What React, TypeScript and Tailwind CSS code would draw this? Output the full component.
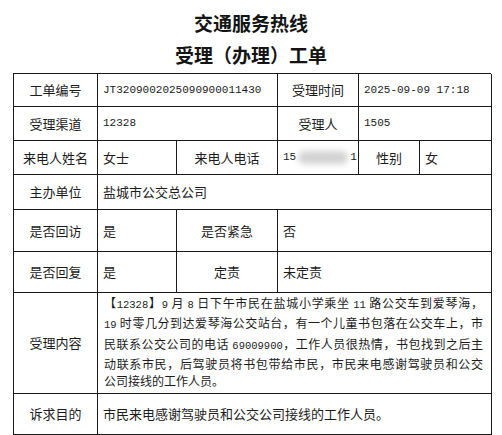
import React from "react";

const cjk = "font-['Noto_Sans_CJK_SC',sans-serif]";

const Num = ({
  children,
  size = "text-[11px]",
}: {
  children: React.ReactNode;
  size?: string;
}) => (
  <span className={`font-['Liberation_Mono',monospace] ${size}`}>
    {children}
  </span>
);

const Label = ({
  children,
  span = "col-span-1",
}: {
  children: React.ReactNode;
  span?: string;
}) => (
  <div
    className={`${span} border-r border-b border-[#1a1a1a] flex items-center justify-center text-[13px] text-[#1c1c1c]`}
  >
    {children}
  </div>
);

const Value = ({
  children,
  span = "col-span-1",
}: {
  children: React.ReactNode;
  span?: string;
}) => (
  <div
    className={`${span} border-r border-b border-[#1a1a1a] flex items-center pl-[5px] text-[13px] text-[#1c1c1c]`}
  >
    {children}
  </div>
);

const contentLines: React.ReactNode[] = [
  <>
    【<Num size="text-[10.5px]">12328</Num>】<Num size="text-[10.5px]">9</Num> 月{" "}
    <Num size="text-[10.5px]">8</Num> 日下午市民在盐城小学乘坐{" "}
    <Num size="text-[10.5px]">11</Num> 路公交车到爱琴海，
  </>,
  <>
    <Num size="text-[10.5px]">19</Num>{" "}
    时零几分到达爱琴海公交站台，有一个儿童书包落在公交车上，市
  </>,
  <>
    民联系公交公司的电话 <Num size="text-[10.5px]">69009900</Num>
    ，工作人员很热情，书包找到之后主
  </>,
  <>动联系市民，后驾驶员将书包带给市民，市民来电感谢驾驶员和公交</>,
];

export default function App() {
  return (
    <div className={`w-[502px] h-[435px] bg-white overflow-hidden ${cjk}`}>
      {/* Title */}
      <div className="pt-[12px] text-center text-[#141414]">
        <h1 className="h-[22px] leading-[22px] text-[19px] font-semibold">
          交通服务热线
        </h1>
        <h2 className="mt-[10px] h-[22px] leading-[22px] text-[19px] font-semibold">
          受理（办理）工单
        </h2>
      </div>

      {/* Table */}
      <div className="ml-[13px] mt-[7px] w-[478px] grid grid-cols-[84px_79px_101px_81px_61px_72px] grid-rows-[33px_34px_34px_35px_42px_41px_101px_41px] border-l border-t border-[#1a1a1a]">
        <Label>工单编号</Label>
        <Value span="col-span-2">
          <Num>JT3209002025090900011430</Num>
        </Value>
        <Label>受理时间</Label>
        <Value span="col-span-2">
          <Num>2025-09-09 17:18</Num>
        </Value>

        <Label>受理渠道</Label>
        <Value span="col-span-2">
          <Num>12328</Num>
        </Value>
        <Label>受理人</Label>
        <Value span="col-span-2">
          <Num>1505</Num>
        </Value>

        <Label>来电人姓名</Label>
        <Value>女士</Value>
        <Label>来电人电话</Label>
        <Value>
          <Num>15</Num>
          <span className="inline-block w-[50px] h-[13px] mx-[2px] bg-[#d2d2d2] rounded-full blur-[3px]" />
          <Num>1</Num>
        </Value>
        <Label>性别</Label>
        <Value>女</Value>

        <Label>主办单位</Label>
        <Value span="col-span-5">盐城市公交总公司</Value>

        <Label>是否回访</Label>
        <Value>是</Value>
        <Label>是否紧急</Label>
        <Value span="col-span-3">否</Value>

        <Label>是否回复</Label>
        <Value>是</Value>
        <Label>定责</Label>
        <Value span="col-span-3">未定责</Value>

        <Label>受理内容</Label>
        <div className="col-span-5 border-r border-b border-[#1a1a1a] pl-[6px] pr-[8px] pt-[1px] text-[12px] leading-[17.3px] text-[#1c1c1c]">
          {contentLines.map((line, idx) => (
            <div
              key={idx}
              className="text-justify [text-align-last:justify] whitespace-nowrap"
            >
              {line}
            </div>
          ))}
          <div>公司接线的工作人员。</div>
        </div>

        <Label>诉求目的</Label>
        <Value span="col-span-5">
          市民来电感谢驾驶员和公交公司接线的工作人员。
        </Value>
      </div>
    </div>
  );
}
